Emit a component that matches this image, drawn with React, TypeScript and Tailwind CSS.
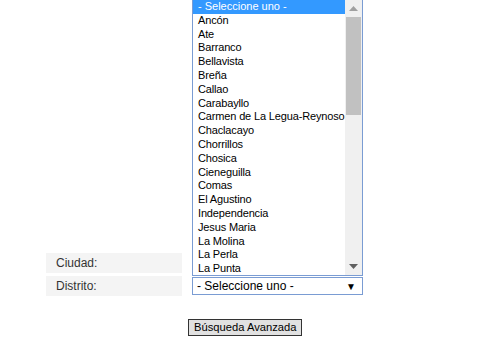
const districts = [
  "Ancón",
  "Ate",
  "Barranco",
  "Bellavista",
  "Breña",
  "Callao",
  "Carabayllo",
  "Carmen de La Legua-Reynoso",
  "Chaclacayo",
  "Chorrillos",
  "Chosica",
  "Cieneguilla",
  "Comas",
  "El Agustino",
  "Independencia",
  "Jesus Maria",
  "La Molina",
  "La Perla",
  "La Punta",
];

function FormRow({ label, children }: { label: string; children?: React.ReactNode }) {
  return (
    <div className="flex items-center">
      <div className="w-[136px] h-[20px] bg-[#f4f4f4] pl-[10px] text-[12px] leading-[20px] text-[#333]">
        {label}
      </div>
      <div className="ml-[10px] w-[171px]">{children}</div>
    </div>
  );
}

export default function App() {
  return (
    <div
      className="relative w-[499px] h-[339px] bg-white overflow-hidden"
      style={{ fontFamily: "'Liberation Sans', Arial, sans-serif" }}
    >
      <div className="pt-[253px] pl-[46px]">
        <FormRow label="Ciudad:" />
        <div className="mt-[3px]">
          <FormRow label="Distrito:">
            <div className="flex h-[18px] items-center justify-between border border-[#7a9cd3] pl-[4px] pr-[6px] text-[12px] text-black">
              <span>- Seleccione uno -</span>
              <span className="text-[10px]">▼</span>
            </div>
          </FormRow>
        </div>
        <div className="mt-[23px] ml-[142px] flex">
          <button className="h-[17px] border border-[#333] bg-[#e1e1e1] px-[5px] text-[11.2px] leading-[15px] text-black">
            Búsqueda Avanzada
          </button>
        </div>
      </div>

      {/* open dropdown list */}
      <div className="absolute left-[192px] top-[-1px] flex w-[171px] h-[277px] overflow-hidden border border-[#7a9cd3] bg-white">
        <div className="flex-1 overflow-hidden whitespace-nowrap text-[11px] leading-[13.8px] text-black">
          <div className="bg-[#3399ff] pl-[5px] text-white">- Seleccione uno -</div>
          {districts.map((d) => (
            <div key={d} className="pl-[5px] tracking-[-0.15px]">
              {d}
            </div>
          ))}
        </div>
        <div className="flex w-[17px] flex-col bg-[#f0f0f0]">
          <div className="flex h-[17px] items-center justify-center">
            <svg width="9" height="5" viewBox="0 0 9 5">
              <path d="M0 5 L4.5 0 L9 5 Z" fill="#a0a0a0" />
            </svg>
          </div>
          <div className="mx-[1px] h-[98px] bg-[#c1c1c1]" />
          <div className="flex-1" />
          <div className="flex h-[17px] items-center justify-center">
            <svg width="9" height="5" viewBox="0 0 9 5">
              <path d="M0 0 L4.5 5 L9 0 Z" fill="#606060" />
            </svg>
          </div>
        </div>
      </div>
    </div>
  );
}
